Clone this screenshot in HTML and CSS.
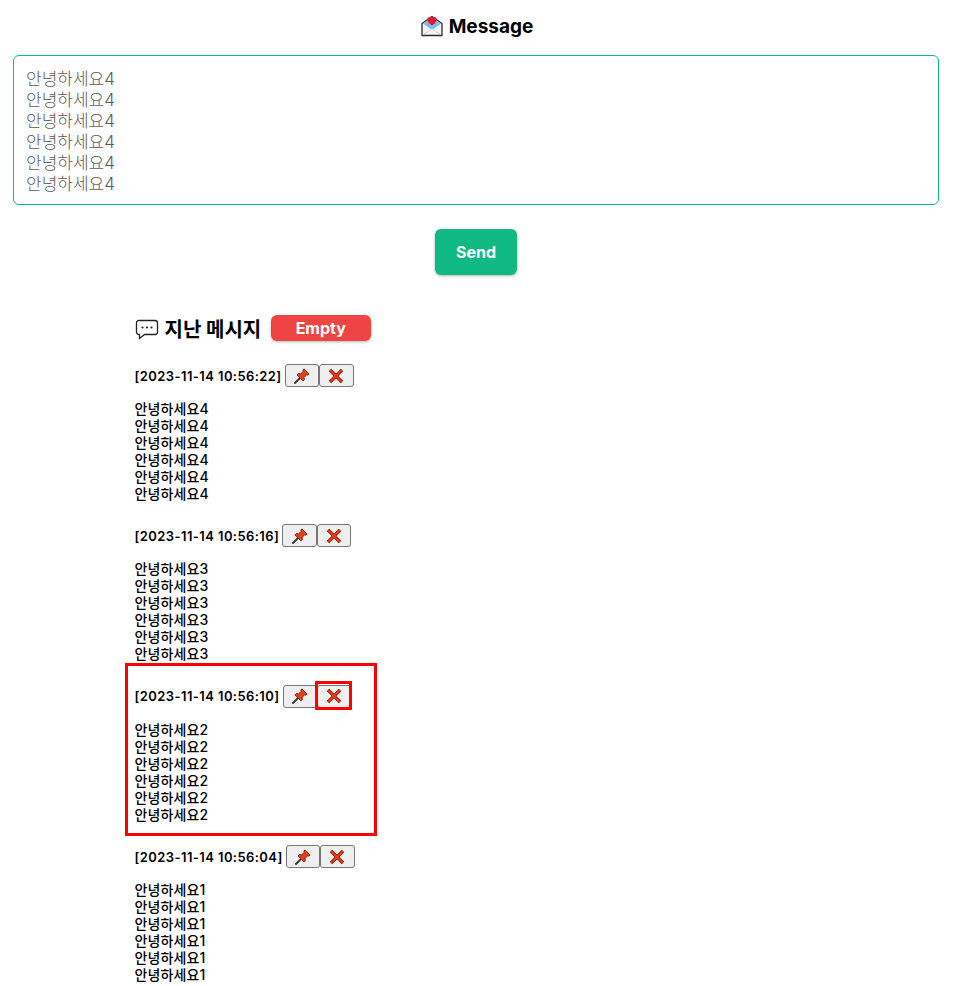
FILE: index.html
```html
<!DOCTYPE html>
<html lang="ko">
<head>
<meta charset="utf-8">
<title>Message</title>
<link rel="stylesheet" href="styles.css">
</head>
<body>
<main class="page">
  <h1 class="title">
    <svg class="mail" viewBox="0 0 22 22" width="22" height="22">
      <path d="M1 8.500 11 1.500 21 8.500V20.500H1Z" fill="#f2f4f6" stroke="#2a2a2a" stroke-width="1.300" stroke-linejoin="round"/>
      <path d="M2 8.500 6 6H16L20 8.500 11 15Z" fill="#7dbcf0"/>
      <path d="M2 19.500 11 14 20 19.500" fill="none" stroke="#d4d8dc" stroke-width="1"/>
      <path d="M11 10.500C8 8.300 6.300 6.700 6.300 4.700 6.300 3 7.500 2 8.700 2 9.700 2 10.500 2.500 11 3.400 11.500 2.500 12.300 2 13.300 2 14.500 2 15.700 3 15.700 4.700 15.700 6.700 14 8.300 11 10.500Z" fill="#e3172e"/>
    </svg>
    <span>Message</span>
  </h1>
  <textarea class="input" spellcheck="false">안녕하세요4
안녕하세요4
안녕하세요4
안녕하세요4
안녕하세요4
안녕하세요4</textarea>
  <div class="send-row"><button class="send">Send</button></div>
  <section class="history">
    <div class="history-head">
      <svg class="bubble" viewBox="0 0 24 24" width="24" height="24">
        <path d="M4.500 4.500H20a2.500 2.500 0 0 1 2.500 2.500v9a2.500 2.500 0 0 1-2.500 2.500H9.500L4.500 22.500V18.500A2.500 2.500 0 0 1 1.500 16V7A2.500 2.500 0 0 1 4.500 4.500Z" fill="#fff" stroke="#222" stroke-width="1.300"/>
        <circle cx="7.500" cy="11.500" r="1.100" fill="#222"/><circle cx="12" cy="11.500" r="1.100" fill="#222"/><circle cx="16.500" cy="11.500" r="1.100" fill="#222"/>
      </svg>
      <h2 class="history-title">지난 메시지</h2>
      <button class="empty">Empty</button>
    </div>

    <article class="item">
      <div class="item-head"><span class="stamp">[2023-11-14 10:56:22]</span>
        <span class="btns">
          <button class="icon-btn"><svg class="pin" viewBox="0 0 16 16"><path d="M1 15 6 10" stroke="#333" stroke-width="1.800" stroke-linecap="round"/><path d="M10 .8 15.200 6 14 7.200 12.600 6.800 10.200 9.400 10.400 11.800 9 13 3 7 4.200 5.600 6.600 5.800 9.200 3.400 8.800 2Z" fill="#e63e1a" stroke="#4a1608" stroke-width=".7" stroke-linejoin="round"/></svg></button>
          <button class="icon-btn"><svg class="cross" viewBox="0 0 16 16"><path d="M2 2 14 14M14 2 2 14" stroke="#6a1c0c" stroke-width="3.400"/><path d="M2.300 2.300 13.700 13.700M13.700 2.300 2.300 13.700" stroke="#e8391b" stroke-width="2.300"/></svg></button>
        </span>
      </div>
      <p class="msg">안녕하세요4<br>안녕하세요4<br>안녕하세요4<br>안녕하세요4<br>안녕하세요4<br>안녕하세요4</p>
    </article>

    <article class="item">
      <div class="item-head"><span class="stamp">[2023-11-14 10:56:16]</span>
        <span class="btns">
          <button class="icon-btn"><svg class="pin" viewBox="0 0 16 16"><path d="M1 15 6 10" stroke="#333" stroke-width="1.800" stroke-linecap="round"/><path d="M10 .8 15.200 6 14 7.200 12.600 6.800 10.200 9.400 10.400 11.800 9 13 3 7 4.200 5.600 6.600 5.800 9.200 3.400 8.800 2Z" fill="#e63e1a" stroke="#4a1608" stroke-width=".7" stroke-linejoin="round"/></svg></button>
          <button class="icon-btn"><svg class="cross" viewBox="0 0 16 16"><path d="M2 2 14 14M14 2 2 14" stroke="#6a1c0c" stroke-width="3.400"/><path d="M2.300 2.300 13.700 13.700M13.700 2.300 2.300 13.700" stroke="#e8391b" stroke-width="2.300"/></svg></button>
        </span>
      </div>
      <p class="msg">안녕하세요3<br>안녕하세요3<br>안녕하세요3<br>안녕하세요3<br>안녕하세요3<br>안녕하세요3</p>
    </article>

    <article class="item marked">
      <div class="item-head"><span class="stamp">[2023-11-14 10:56:10]</span>
        <span class="btns">
          <button class="icon-btn"><svg class="pin" viewBox="0 0 16 16"><path d="M1 15 6 10" stroke="#333" stroke-width="1.800" stroke-linecap="round"/><path d="M10 .8 15.200 6 14 7.200 12.600 6.800 10.200 9.400 10.400 11.800 9 13 3 7 4.200 5.600 6.600 5.800 9.200 3.400 8.800 2Z" fill="#e63e1a" stroke="#4a1608" stroke-width=".7" stroke-linejoin="round"/></svg></button>
          <button class="icon-btn marked-btn"><svg class="cross" viewBox="0 0 16 16"><path d="M2 2 14 14M14 2 2 14" stroke="#6a1c0c" stroke-width="3.400"/><path d="M2.300 2.300 13.700 13.700M13.700 2.300 2.300 13.700" stroke="#e8391b" stroke-width="2.300"/></svg></button>
        </span>
      </div>
      <p class="msg">안녕하세요2<br>안녕하세요2<br>안녕하세요2<br>안녕하세요2<br>안녕하세요2<br>안녕하세요2</p>
    </article>

    <article class="item">
      <div class="item-head"><span class="stamp">[2023-11-14 10:56:04]</span>
        <span class="btns">
          <button class="icon-btn"><svg class="pin" viewBox="0 0 16 16"><path d="M1 15 6 10" stroke="#333" stroke-width="1.800" stroke-linecap="round"/><path d="M10 .8 15.200 6 14 7.200 12.600 6.800 10.200 9.400 10.400 11.800 9 13 3 7 4.200 5.600 6.600 5.800 9.200 3.400 8.800 2Z" fill="#e63e1a" stroke="#4a1608" stroke-width=".7" stroke-linejoin="round"/></svg></button>
          <button class="icon-btn"><svg class="cross" viewBox="0 0 16 16"><path d="M2 2 14 14M14 2 2 14" stroke="#6a1c0c" stroke-width="3.400"/><path d="M2.300 2.300 13.700 13.700M13.700 2.300 2.300 13.700" stroke="#e8391b" stroke-width="2.300"/></svg></button>
        </span>
      </div>
      <p class="msg">안녕하세요1<br>안녕하세요1<br>안녕하세요1<br>안녕하세요1<br>안녕하세요1<br>안녕하세요1</p>
    </article>
  </section>
</main>
</body>
</html>
```
FILE: styles.css
```css
*, *::before, *::after { box-sizing: border-box; }
html, body { margin: 0; padding: 0; background: #fff; }
body {
  font-family: Inter, "Noto Sans CJK KR", sans-serif;
  color: #000;
  overflow: hidden;
  height: 986px;
}
.page { padding: 0 24px 0 13px; }
.title {
  margin: 0;
  height: 55px;
  display: flex;
  align-items: center;
  justify-content: center;
  gap: 6px;
  font-size: 19px;
  font-weight: 700;
  padding: 0 0 3px 2px;
}
.input {
  display: block;
  width: 926px;
  height: 150px;
  padding: 13px 12px;
  border: 1px solid #10b981;
  border-radius: 6px;
  outline: none;
  resize: none;
  overflow: hidden;
  font: 300 17px/21px Inter, "Noto Sans CJK KR", sans-serif;
  color: #5c5c5c;
}
.send-row { display: flex; justify-content: center; padding: 24px 0 0 0; }
.send {
  width: 82px;
  height: 46px;
  border: 0;
  border-radius: 6px;
  background: #10b981;
  color: #fff;
  font: 700 16px Inter, "Noto Sans CJK KR", sans-serif;
  box-shadow: 0 1px 3px rgba(0,0,0,.3);
}
.history { margin: 40px 0 0 121.500px; }
.history-head { display: flex; align-items: center; height: 26px; }
.bubble { margin-right: 6px; }
.history-title { margin: 0 9.500px 0 0; font-size: 20px; font-weight: 700; white-space: nowrap; }
.empty {
  width: 100px;
  height: 26px;
  border: 0;
  border-radius: 6px;
  background: #ef4444;
  color: #fff;
  font: 700 16px Inter, sans-serif;
  box-shadow: 0 1px 3px rgba(0,0,0,.3);
}
.item { position: relative; height: 160.400px; padding-top: 23px; }
.item-head { display: flex; align-items: center; height: 23px; gap: 3px; }
.stamp { font-size: 13px; font-weight: 600; letter-spacing: .42px; white-space: nowrap; }
.btns { display: flex; }
.icon-btn {
  width: 34.500px;
  height: 23px;
  padding: 0;
  display: flex;
  align-items: center;
  justify-content: center;
  background: #efefef;
  border: 1px solid #767676;
  border-radius: 3px;
}
.icon-btn svg { width: 16px; height: 16px; display: block; }
.msg { margin: 13px 0 0; font-size: 14px; font-weight: 500; letter-spacing: .12px; line-height: 17px; }
.marked::after {
  content: "";
  position: absolute;
  left: -10px;
  top: 1px;
  width: 252px;
  height: 173px;
  border: 3px solid #f00;
  pointer-events: none;
}
.marked-btn { position: relative; }
.marked-btn::after {
  content: "";
  position: absolute;
  left: -3px;
  top: -5px;
  width: 37px;
  height: 29px;
  border: 3px solid #f00;
  pointer-events: none;
}
```
